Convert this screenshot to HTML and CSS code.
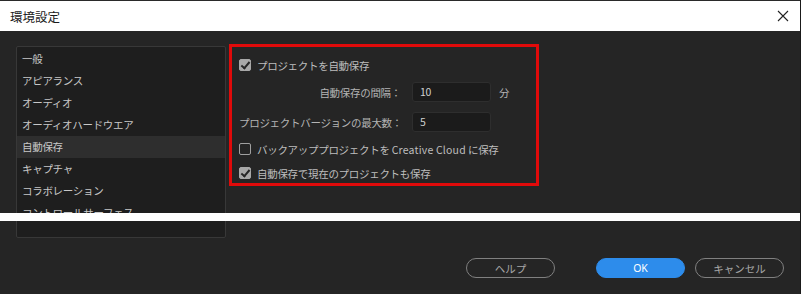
FILE: index.html
```html
<!DOCTYPE html>
<html lang="ja">
<head>
    <meta charset="UTF-8">
    <title>環境設定</title>
    <link rel="stylesheet" href="styles.css">
</head>
<body>
    <div class="window">
        <div class="titlebar">
            <span class="title">環境設定</span>
            <svg class="close" width="12" height="12" viewBox="0 0 12 12">
                <path d="M1 1 L11 11 M11 1 L1 11" stroke="#222" stroke-width="1.1" fill="none"/>
            </svg>
        </div>

        <div class="content">
            <ul class="sidebar">
                <li>一般</li>
                <li>アピアランス</li>
                <li>オーディオ</li>
                <li>オーディオハードウエア</li>
                <li class="active">自動保存</li>
                <li>キャプチャ</li>
                <li>コラボレーション</li>
                <li>コントロールサーフェス</li>
            </ul>

            <div class="panel">
                <label class="check-row">
                    <span class="box checked"></span>
                    <span>プロジェクトを自動保存</span>
                </label>
                <div class="field-row first">
                    <span class="field-label">自動保存の間隔：</span>
                    <span class="field-input">10</span>
                    <span class="unit">分</span>
                </div>
                <div class="field-row">
                    <span class="field-label">プロジェクトバージョンの最大数：</span>
                    <span class="field-input">5</span>
                </div>
                <label class="check-row backup">
                    <span class="box"></span>
                    <span>バックアッププロジェクトを <span class="latin">Creative Cloud</span> に保存</span>
                </label>
                <label class="check-row last">
                    <span class="box checked"></span>
                    <span>自動保存で現在のプロジェクトも保存</span>
                </label>
            </div>
        </div>

        <div class="footer">
            <button class="btn help">ヘルプ</button>
            <button class="btn primary">OK</button>
            <button class="btn">キャンセル</button>
        </div>

        <div class="seam"></div>
    </div>
</body>
</html>
```

FILE: styles.css
```css
body {
    margin: 0;
    background-color: #252525;
    font-family: "Noto Sans CJK JP", "Noto Sans", sans-serif;
    font-size: 10.5px;
    letter-spacing: -0.3px;
    color: #c4c4c4;
    overflow: hidden;
}

.window {
    position: relative;
    height: 294px;
    border-right: 1px solid #1a1a1a;
    box-sizing: border-box;
}

.titlebar {
    height: 30px;
    background: #ffffff;
    border-top: 1px solid #2a2a2a;
    display: flex;
    align-items: center;
    justify-content: space-between;
    padding: 0 11px 0 10px;
}

.title {
    font-size: 12.5px;
    letter-spacing: 0;
    color: #1a1a1a;
}

.content {
    display: flex;
    align-items: flex-start;
    height: 227px;
    box-sizing: border-box;
    padding: 13px 0 0 16px;
}

.sidebar {
    list-style: none;
    margin: 2px 0 0 0;
    padding: 1px 0 0 0;
    width: 208px;
    height: 189px;
    background: #1e1e1e;
    border: 1px solid #383838;
    border-radius: 2px;
    overflow: hidden;
}

.sidebar li {
    height: 22px;
    line-height: 22px;
    padding-left: 5px;
    color: #c8c8c8;
    white-space: nowrap;
}

.sidebar li.active {
    background: #2e2e2e;
}

.panel {
    margin-left: 3px;
    width: 297px;
    height: 129px;
    border: 3px solid #e00a0a;
    padding: 7px 0 0 7px;
}

.check-row {
    display: flex;
    align-items: center;
    height: 22px;
    color: #bdbdbd;
    white-space: nowrap;
}

.latin {
    letter-spacing: 0.2px;
}

.box {
    width: 10px;
    height: 10px;
    border: 1px solid #a0a0a0;
    border-radius: 2px;
    margin-right: 6px;
    position: relative;
    flex-shrink: 0;
}

.box.checked {
    background: #a8a8a8;
    border-color: #a8a8a8;
}

.box.checked::after {
    content: "";
    position: absolute;
    left: 3px;
    top: 0px;
    width: 3px;
    height: 7px;
    border: solid #262626;
    border-width: 0 2px 2px 0;
    transform: rotate(40deg);
}

.field-row {
    display: flex;
    align-items: center;
    margin-top: 10px;
}

.field-row.first {
    margin-top: 6px;
}

.field-label {
    width: 162px;
    flex-shrink: 0;
    text-align: right;
    color: #b4b4b4;
    white-space: nowrap;
}

.field-input {
    margin-left: 11px;
    width: 70px;
    height: 18px;
    line-height: 18px;
    padding-left: 7px;
    background: #1b1b1b;
    border: 1px solid #2e2e2e;
    border-radius: 3px;
    color: #d0d0d0;
}

.unit {
    margin-left: 8px;
    color: #b4b4b4;
}

.check-row.backup {
    margin-top: 6px;
}

.check-row.last {
    margin-top: 2px;
}

.footer {
    display: flex;
    justify-content: flex-end;
    padding: 0 16px 0 0;
}

.btn {
    height: 20px;
    width: 89px;
    border: 1px solid #808080;
    border-radius: 10px;
    background: transparent;
    color: #a8a8a8;
    font-family: inherit;
    font-size: 10.5px;
    padding: 0;
    margin-left: 10px;
}

.btn.help {
    margin-right: 31px;
}

.btn.primary {
    background: #2d8ceb;
    border-color: #2d8ceb;
    color: #ffffff;
    font-family: "Noto Sans", sans-serif;
}

.seam {
    position: absolute;
    left: 0;
    top: 213px;
    width: 800px;
    height: 8px;
    background: #ffffff;
}
```
